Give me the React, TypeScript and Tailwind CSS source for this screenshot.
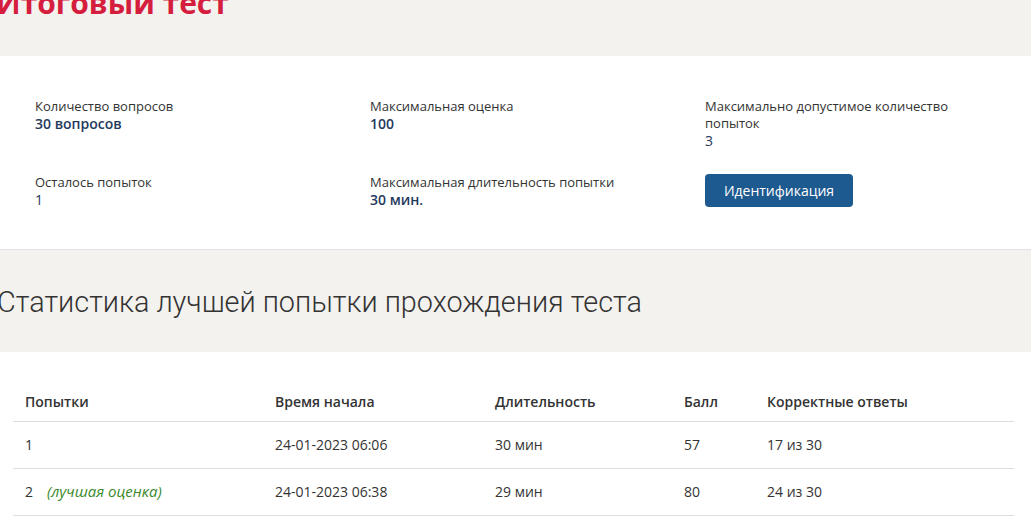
import React from "react";

const infoItems = [
  { label: "Количество вопросов", value: "30 вопросов", bold: true },
  { label: "Максимальная оценка", value: "100", bold: true },
  { label: "Максимально допустимое количество попыток", value: "3", bold: false },
  { label: "Осталось попыток", value: "1", bold: false },
  { label: "Максимальная длительность попытки", value: "30 мин.", bold: true },
];

const attempts = [
  { n: "1", best: false, start: "24-01-2023 06:06", duration: "30 мин", score: "57", correct: "17 из 30" },
  { n: "2", best: true, start: "24-01-2023 06:38", duration: "29 мин", score: "80", correct: "24 из 30" },
];

const InfoItem = ({ label, value, bold }: { label: string; value: string; bold: boolean }) => (
  <div className="flex flex-col">
    <span className="text-[13px] leading-[17px] text-[#333]">{label}</span>
    <span className={`text-[14px] leading-[17px] text-[#1f3a5c] ${bold ? "font-semibold" : "font-normal"}`}>
      {value}
    </span>
  </div>
);

export default function App() {
  return (
    <div className="w-[1031px] h-[521px] overflow-hidden bg-white text-[#333]" style={{ fontFamily: '"Open Sans", "Noto Sans", sans-serif' }}>
      {/* Title band */}
      <div className="h-[56px] bg-[#f3f2ef] overflow-hidden">
        <h1 className="ml-[-4px] mt-[-12px] text-[30px] leading-[30px] font-bold text-[#d51d3d]">
          Итоговый тест
        </h1>
      </div>

      {/* Info block */}
      <div className="h-[194px] border-b border-[#e2e0e0] pl-[35px] pt-[42px]">
        <div className="grid grid-cols-[335px_335px_300px] gap-y-[32px]">
          <div><InfoItem {...infoItems[0]} /></div>
          <div><InfoItem {...infoItems[1]} /></div>
          <div className="w-[250px]"><InfoItem {...infoItems[2]} /></div>
          <div className="mt-[-7px]"><InfoItem {...infoItems[3]} /></div>
          <div className="mt-[-7px]"><InfoItem {...infoItems[4]} /></div>
          <div className="mt-[-7px]">
            <button className="h-[33px] w-[148px] rounded-[4px] bg-[#1d5a8f] text-[14px] text-white">
              Идентификация
            </button>
          </div>
        </div>
      </div>

      {/* Stats heading */}
      <div className="h-[102px] bg-[#f3f2ef] flex items-center">
        <h2
          className="ml-[-3px] mt-[4px] text-[28.8px] font-light text-[#333]"
          style={{ fontFamily: 'Roboto, "Noto Sans", sans-serif' }}
        >
          Статистика лучшей попытки прохождения теста
        </h2>
      </div>

      {/* Table */}
      <div className="pt-[31px] pl-[13px]">
        <table className="w-[1001px] table-fixed border-collapse text-[14px]">
          <colgroup>
            <col className="w-[262px]" />
            <col className="w-[220px]" />
            <col className="w-[189px]" />
            <col className="w-[83px]" />
            <col />
          </colgroup>
          <thead>
            <tr className="border-b border-[#dddddd]">
              <th className="h-[38px] pl-[12px] text-left font-semibold">Попытки</th>
              <th className="text-left font-semibold">Время начала</th>
              <th className="text-left font-semibold">Длительность</th>
              <th className="text-left font-semibold">Балл</th>
              <th className="text-left font-semibold">Корректные ответы</th>
            </tr>
          </thead>
          <tbody>
            {attempts.map((a) => (
              <tr key={a.n} className="border-b border-[#dddddd]">
                <td className="h-[47px] pl-[12px]">
                  {a.n}
                  {a.best && <span className="ml-[14px] text-[15px] italic text-[#3a8a2a]">(лучшая оценка)</span>}
                </td>
                <td>{a.start}</td>
                <td>{a.duration}</td>
                <td>{a.score}</td>
                <td>{a.correct}</td>
              </tr>
            ))}
          </tbody>
        </table>
      </div>
    </div>
  );
}
